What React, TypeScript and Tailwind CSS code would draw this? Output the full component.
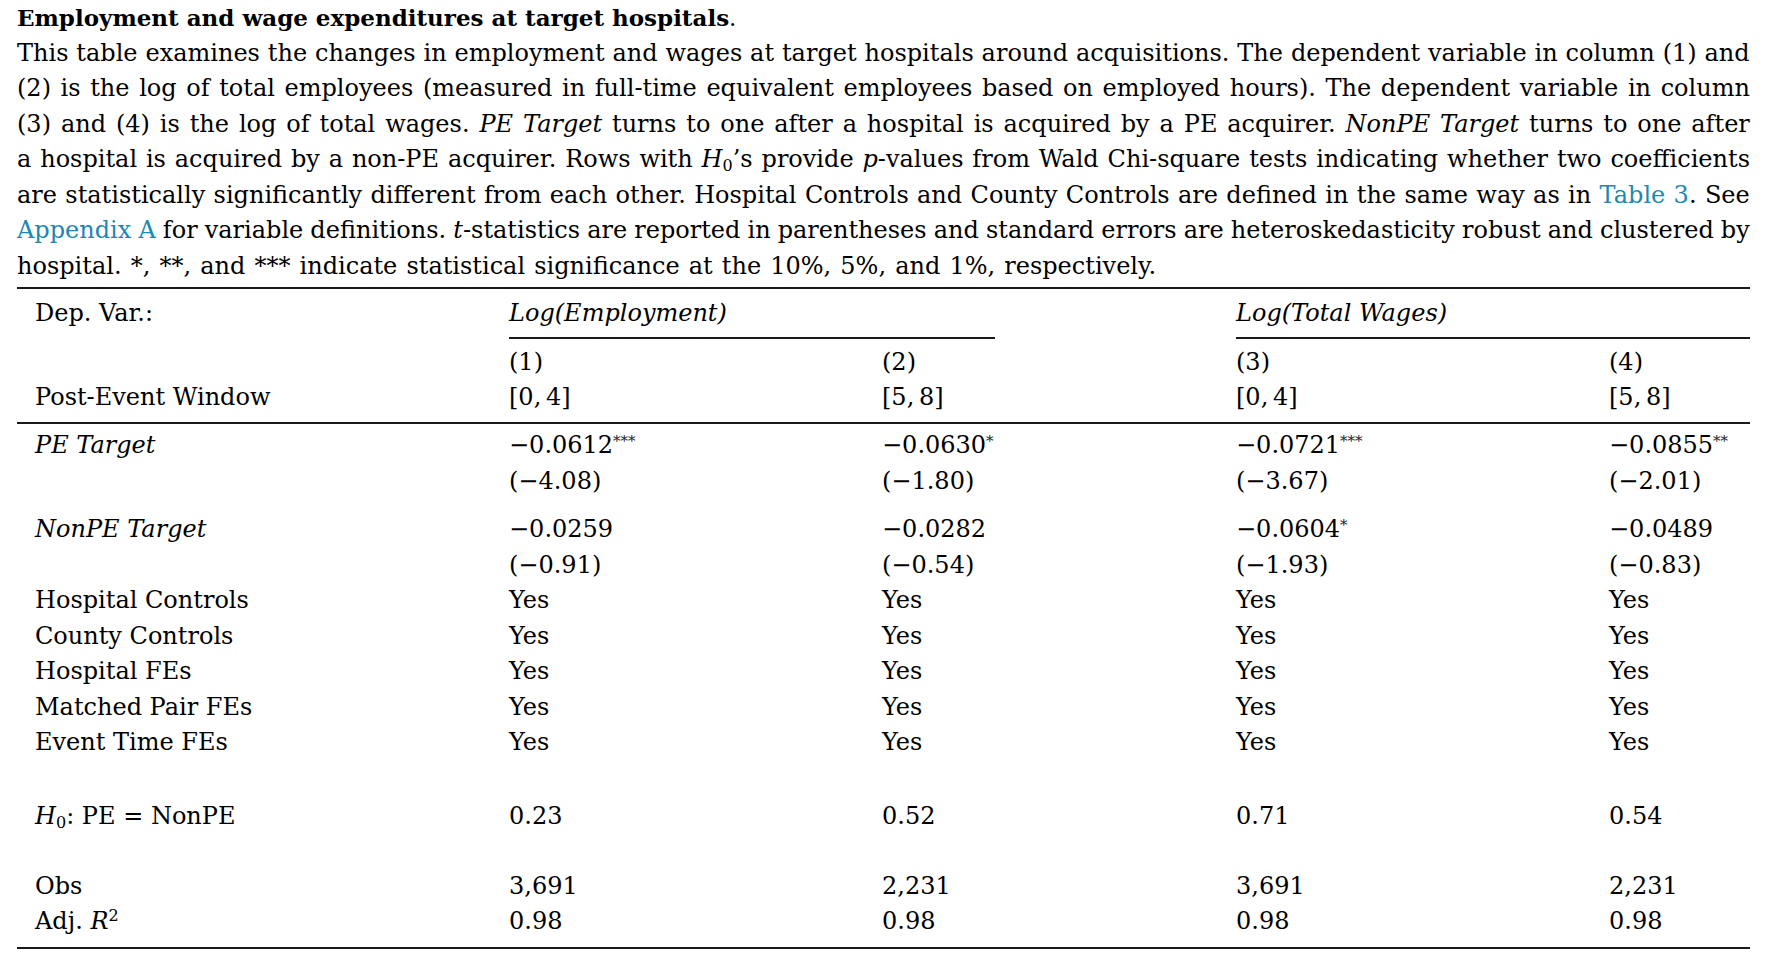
import React from "react";

const LINK = "text-[#1c89b3]";

function w(s: string): React.ReactNode[] {
  return s.split(" ");
}

const lines: React.ReactNode[][] = [
  w("This table examines the changes in employment and wages at target hospitals around acquisitions. The dependent variable in column (1) and"),
  w("(2) is the log of total employees (measured in full-time equivalent employees based on employed hours). The dependent variable in column"),
  [
    ...w("(3) and (4) is the log of total wages."),
    <i>PE</i>,
    <i>Target</i>,
    ...w("turns to one after a hospital is acquired by a PE acquirer."),
    <i>NonPE</i>,
    <i>Target</i>,
    ...w("turns to one after"),
  ],
  [
    ...w("a hospital is acquired by a non-PE acquirer. Rows with"),
    <>
      <i>H</i>
      <sub className="text-[16px]">0</sub>’s
    </>,
    "provide",
    <>
      <i>p</i>-values
    </>,
    ...w("from Wald Chi-square tests indicating whether two coefficients"),
  ],
  [
    ...w("are statistically significantly different from each other. Hospital Controls and County Controls are defined in the same way as in"),
    <span className={LINK}>Table</span>,
    <>
      <span className={LINK}>3</span>.
    </>,
    "See",
  ],
  [
    <span className={LINK}>Appendix</span>,
    <span className={LINK}>A</span>,
    ...w("for variable definitions."),
    <>
      <i>t</i>-statistics
    </>,
    ...w("are reported in parentheses and standard errors are heteroskedasticity robust and clustered by"),
  ],
];

function C(v: string, s?: string) {
  return (
    <>
      {v}
      {s ? <sup className="text-[15px] text-[#222]">{s}</sup> : null}
    </>
  );
}

function Row({ cells, className }: { cells: React.ReactNode[]; className?: string }) {
  return (
    <div
      className={`grid grid-cols-[492px_373px_354px_373px_1fr] h-[35.5px] leading-[35.5px] whitespace-nowrap ${className ?? ""}`}
    >
      {cells.map((c, i) => (
        <div key={i} className={i === 0 ? "pl-[18px]" : ""}>
          {c}
        </div>
      ))}
    </div>
  );
}

function Rule({ className }: { className?: string }) {
  return <div className={`h-[2px] bg-[#1a1a1a] ${className ?? ""}`} />;
}

export default function App() {
  const yes = ["Yes", "Yes", "Yes", "Yes"];
  return (
    <div className="w-[1767px] min-h-[965px] bg-white px-[17px] text-black font-['DejaVu_Serif',serif] text-[24px]">
      <div className="h-[35.5px] leading-[35.5px] font-bold text-[23px] whitespace-nowrap">
        Employment and wage expenditures at target hospitals<span className="font-normal">.</span>
      </div>
      {lines.map((ln, i) => (
        <div key={i} className="flex justify-between h-[35.5px] leading-[35.5px] whitespace-nowrap">
          {ln.map((t, j) => (
            <span key={j}>{t}</span>
          ))}
        </div>
      ))}
      <div className="h-[35.5px] leading-[35.5px] whitespace-nowrap [word-spacing:1.5px]">
        hospital. *, **, and *** indicate statistical significance at the 10%, 5%, and 1%, respectively.
      </div>

      <Rule className="mt-[2.5px]" />
      <Row
        className="mt-[7.5px]"
        cells={["Dep. Var.:", <i>Log(Employment)</i>, "", <i>Log(Total Wages)</i>, ""]}
      />
      <div className="flex h-[2px] mt-[5px]">
        <div className="ml-[492px] w-[486px] bg-[#1a1a1a]" />
        <div className="ml-[241px] flex-1 bg-[#1a1a1a]" />
      </div>
      <Row className="mt-[6px]" cells={["", "(1)", "(2)", "(3)", "(4)"]} />
      <Row cells={["Post-Event Window", "[0,\u20094]", "[5,\u20098]", "[0,\u20094]", "[5,\u20098]"]} />
      <Rule className="mt-[6px]" />
      <Row
        className="mt-[4.5px]"
        cells={[
          <i>PE Target</i>,
          C("−0.0612", "***"),
          C("−0.0630", "*"),
          C("−0.0721", "***"),
          C("−0.0855", "**"),
        ]}
      />
      <Row cells={["", "(−4.08)", "(−1.80)", "(−3.67)", "(−2.01)"]} />
      <Row
        className="mt-[13px]"
        cells={[<i>NonPE Target</i>, C("−0.0259"), C("−0.0282"), C("−0.0604", "*"), C("−0.0489")]}
      />
      <Row cells={["", "(−0.91)", "(−0.54)", "(−1.93)", "(−0.83)"]} />
      <Row cells={["Hospital Controls", ...yes]} />
      <Row cells={["County Controls", ...yes]} />
      <Row cells={["Hospital FEs", ...yes]} />
      <Row cells={["Matched Pair FEs", ...yes]} />
      <Row cells={["Event Time FEs", ...yes]} />
      <Row
        className="mt-[38px]"
        cells={[
          <>
            <i>H</i>
            <sub className="text-[16px]">0</sub>: PE = NonPE
          </>,
          "0.23",
          "0.52",
          "0.71",
          "0.54",
        ]}
      />
      <Row className="mt-[34.5px]" cells={["Obs", "3,691", "2,231", "3,691", "2,231"]} />
      <Row
        cells={[
          <>
            Adj. <i>R</i>
            <sup className="text-[16px]">2</sup>
          </>,
          "0.98",
          "0.98",
          "0.98",
          "0.98",
        ]}
      />
      <Rule className="mt-[7px]" />
    </div>
  );
}
